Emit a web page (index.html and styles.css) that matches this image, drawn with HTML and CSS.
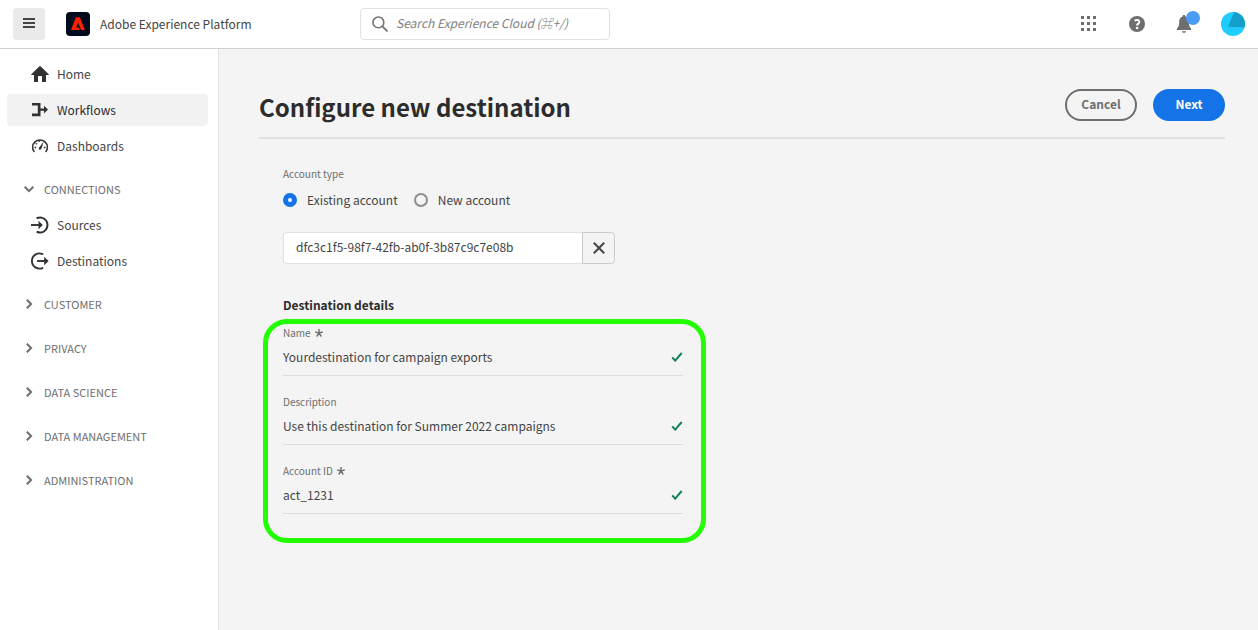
FILE: index.html
```html
<!DOCTYPE html>
<html lang="en">
<head>
<meta charset="utf-8">
<meta name="viewport" content="width=device-width, initial-scale=1">
<title>Adobe Experience Platform</title>
<link rel="stylesheet" href="styles.css">
</head>
<body>
<header class="topbar">
  <button class="menu-button" type="button" aria-label="Menu">
    <svg width="12" height="10" viewBox="0 0 12 10" fill="currentColor" aria-hidden="true"><path d="M0 0h12v2H0zM0 4h12v2H0zM0 8h12v2H0z"/></svg>
  </button>
  <a class="brand" href="#">
    <svg width="24" height="24" viewBox="0 0 24 24" aria-hidden="true"><rect width="24" height="24" rx="4" fill="#000b1d"/><path fill="#fa2000" d="M9.900 5.200h4L19 18h-3.900l-3-7.300-2 4.800h2.700l.9 2.500H5z"/></svg>
    <span>Adobe Experience Platform</span>
  </a>
  <div class="search">
    <svg width="16" height="16" viewBox="0 0 16 16" fill="none" stroke="currentColor" aria-hidden="true"><circle cx="6.400" cy="6.400" r="5.400" stroke-width="1.600"/><path d="M10.400 10.400l4.500 4.500" stroke-width="1.900" stroke-linecap="round"/></svg>
    <input class="search-input" type="search" aria-label="Search" placeholder="Search Experience Cloud (⌘+/)">
  </div>
  <div class="tools">
    <button class="tool" type="button" aria-label="Apps">
      <svg width="16" height="16" viewBox="0 0 16 16" fill="currentColor" aria-hidden="true"><path d="M0 0h3v3H0zM6 0h3v3H6zM12 0h3v3h-3zM0 6h3v3H0zM6 6h3v3H6zM12 6h3v3h-3zM0 12h3v3H0zM6 12h3v3H6zM12 12h3v3h-3z"/></svg>
    </button>
    <button class="tool" type="button" aria-label="Help">
      <svg width="16" height="16" viewBox="0 0 16 16" aria-hidden="true"><circle cx="8" cy="8" r="8" fill="currentColor"/><path d="M5.600 4.700C7.700 3.400 10.300 4 10.300 5.900c0 1.700-2.200 1.800-2.200 3.700" fill="none" stroke="#fff" stroke-width="2.100"/><circle cx="8.100" cy="12" r="1.300" fill="#fff"/></svg>
    </button>
    <button class="tool" type="button" aria-label="Notifications">
      <svg width="18" height="18" viewBox="0 0 18 18" fill="currentColor" aria-hidden="true"><path d="M8 0C7.100 0 6.600.6 6.600 1.500 4.200 2.300 3.200 4.300 3.200 6.800c0 3.500-.5 4.700-1.700 6-.4.400-.7.800-.7 1.400v.8h14.400v-.8c0-.6-.3-1-.7-1.400-1.200-1.300-1.700-2.500-1.700-6 0-2.500-1-4.500-3.400-5.300C9.400.6 8.900 0 8 0zM5.900 16.200h4.200c-.2 1-1.100 1.600-2.100 1.600s-1.900-.6-2.100-1.600z"/></svg>
      <span class="badge"></span>
    </button>
    <button class="tool" type="button" aria-label="Account">
      <svg width="24" height="24" viewBox="0 0 24 24" aria-hidden="true"><circle cx="12" cy="12" r="12" fill="#1fceff"/><path d="M13.200.1A12 12 0 0 1 23.500 15.300L7 14.800z" fill="#139fc9"/></svg>
    </button>
  </div>
</header>
<div class="shell">
  <nav class="sidebar" aria-label="Main">
    <div class="nav-list">
      <a class="nav-item" href="#"><svg width="18" height="18" viewBox="0 0 18 18" fill="currentColor" aria-hidden="true"><path d="M17.700 9.200L9.500 1.300a.7.700 0 0 0-1 0L.3 9.200c-.4.400-.1.800.3.800H3v6.300c0 .4.300.7.700.7H7v-6h4v6h3.300c.4 0 .7-.3.700-.7V10h2.400c.4 0 .7-.4.300-.8z"/></svg>Home</a>
      <a class="nav-item nav-item--active" href="#"><svg width="18" height="18" viewBox="0 0 18 18" fill="currentColor" aria-hidden="true"><path d="M1 2h8.500v5.500H13V4.800L17 8.600l-4 3.800V9.700H9.500v5.500H1v-2.600h5.800v-8H1z"/></svg>Workflows</a>
      <a class="nav-item" href="#"><svg width="18" height="18" viewBox="0 0 18 18" fill="none" stroke="currentColor" aria-hidden="true"><path d="M3.300 15A7.400 7.400 0 1 1 14.700 15" stroke-width="1.500"/><path d="M3.500 10.500h1.700M4.700 6.200l1.300 1M8 3.400l.3 1.600M14.500 10.500h-1.700" stroke-width="1.300"/><path d="M12.800 4.400L10.300 12c-.8 1.400-3 .6-2.500-1.100z" fill="currentColor" stroke="none"/></svg>Dashboards</a>
    </div>
    <button class="nav-heading" type="button" aria-expanded="true"><svg class="chevron chevron--open" width="10" height="10" viewBox="0 0 10 10" aria-hidden="true"><path d="M2.800.7L7.100 5 2.800 9.300"/></svg>CONNECTIONS</button>
    <div class="nav-list nav-list--nested">
      <a class="nav-item" href="#"><svg width="18" height="18" viewBox="0 0 18 18" fill="none" stroke="currentColor" stroke-width="1.900" aria-hidden="true"><path d="M6.300 2A7.500 7.500 0 1 1 6.300 16" stroke-linecap="round"/><path d="M0 9h9"/><path d="M7.500 4.800l4.300 4.200-4.300 4.200z" fill="currentColor" stroke="none"/></svg>Sources</a>
      <a class="nav-item" href="#"><svg width="18" height="18" viewBox="0 0 18 18" fill="none" stroke="currentColor" stroke-width="1.900" aria-hidden="true"><path d="M11.500 2A7.600 7.600 0 1 0 11.500 16" stroke-linecap="round"/><path d="M6 9h8"/><path d="M13.200 4.800L17.600 9l-4.400 4.200z" fill="currentColor" stroke="none"/></svg>Destinations</a>
    </div>
    <div class="nav-groups">
      <button class="nav-heading" type="button" aria-expanded="false"><svg class="chevron" width="10" height="10" viewBox="0 0 10 10" aria-hidden="true"><path d="M2.800.7L7.100 5 2.800 9.300"/></svg>CUSTOMER</button>
      <button class="nav-heading" type="button" aria-expanded="false"><svg class="chevron" width="10" height="10" viewBox="0 0 10 10" aria-hidden="true"><path d="M2.800.7L7.100 5 2.800 9.300"/></svg>PRIVACY</button>
      <button class="nav-heading" type="button" aria-expanded="false"><svg class="chevron" width="10" height="10" viewBox="0 0 10 10" aria-hidden="true"><path d="M2.800.7L7.100 5 2.800 9.300"/></svg>DATA SCIENCE</button>
      <button class="nav-heading" type="button" aria-expanded="false"><svg class="chevron" width="10" height="10" viewBox="0 0 10 10" aria-hidden="true"><path d="M2.800.7L7.100 5 2.800 9.300"/></svg>DATA MANAGEMENT</button>
      <button class="nav-heading" type="button" aria-expanded="false"><svg class="chevron" width="10" height="10" viewBox="0 0 10 10" aria-hidden="true"><path d="M2.800.7L7.100 5 2.800 9.300"/></svg>ADMINISTRATION</button>
    </div>
  </nav>
  <main class="content">
    <div class="page-header">
      <h1 class="page-title">Configure new destination</h1>
      <div class="actions">
        <button class="button" type="button">Cancel</button>
        <button class="button button--primary" type="submit" form="destination-form">Next</button>
      </div>
    </div>
    <form class="form" id="destination-form">
      <div class="label" id="account-type">Account type</div>
      <div class="radio-group" role="radiogroup" aria-labelledby="account-type">
        <label class="radio"><input type="radio" name="account" checked>Existing account</label>
        <label class="radio"><input type="radio" name="account">New account</label>
      </div>
      <div class="picker">
        <input class="picker-input" type="text" aria-label="Account" value="dfc3c1f5-98f7-42fb-ab0f-3b87c9c7e08b">
        <button class="picker-clear" type="button" aria-label="Clear account"><svg width="12" height="12" viewBox="0 0 12 12" fill="none" stroke="currentColor" stroke-width="2" aria-hidden="true"><path d="M.8.8l10.400 10.400M11.200.8L.8 11.200"/></svg></button>
      </div>
      <h2 class="section-title">Destination details</h2>
      <div class="highlight">
        <div class="field">
          <label class="label" for="name">Name <svg class="required" width="8" height="8" viewBox="0 0 8 8" aria-hidden="true"><path d="M4 4V0M4 4L.2 2.800M4 4l3.800-1.200M4 4L1.700 7.500M4 4l2.300 3.500"/></svg></label>
          <div class="control">
            <input class="field-input" id="name" type="text" value="Yourdestination for campaign exports" required>
            <svg class="check" width="12" height="10" viewBox="0 0 12 10" aria-hidden="true"><path d="M1.200 5.300l3 3.300L10.700 1"/></svg>
          </div>
        </div>
        <div class="field">
          <label class="label" for="description">Description</label>
          <div class="control">
            <input class="field-input" id="description" type="text" value="Use this destination for Summer 2022 campaigns">
            <svg class="check" width="12" height="10" viewBox="0 0 12 10" aria-hidden="true"><path d="M1.200 5.300l3 3.300L10.700 1"/></svg>
          </div>
        </div>
        <div class="field">
          <label class="label" for="account-id">Account ID <svg class="required" width="8" height="8" viewBox="0 0 8 8" aria-hidden="true"><path d="M4 4V0M4 4L.2 2.800M4 4l3.800-1.200M4 4L1.700 7.500M4 4l2.300 3.500"/></svg></label>
          <div class="control">
            <input class="field-input" id="account-id" type="text" value="act_1231" required>
            <svg class="check" width="12" height="10" viewBox="0 0 12 10" aria-hidden="true"><path d="M1.200 5.300l3 3.300L10.700 1"/></svg>
          </div>
        </div>
      </div>
    </form>
  </main>
</div>
</body>
</html>
```
FILE: styles.css
```css
* {
  box-sizing: border-box;
}

body {
  margin: 0;
  min-height: 100vh;
  display: flex;
  flex-direction: column;
  background: #fff;
  color: #444;
  font-family: "Noto Sans CJK SC", "Open Sans", sans-serif;
  font-size: 12px;
  line-height: 20px;
}

button,
input {
  font: inherit;
  color: inherit;
}

button {
  padding: 0;
  border: 0;
  background: none;
  cursor: pointer;
}

a {
  color: inherit;
  text-decoration: none;
}

svg {
  display: block;
  flex: none;
}

/* Top bar */
.topbar {
  display: flex;
  align-items: center;
  height: 49px;
  padding: 0 13px;
  border-bottom: 1px solid #d0d0d0;
}

.menu-button {
  display: grid;
  place-items: center;
  width: 32px;
  height: 32px;
  padding-bottom: 2px;
  border-radius: 4px;
  background: #eaeaea;
}

.brand {
  display: flex;
  align-items: center;
  gap: 10px;
  width: 294px;
  margin-left: 21px;
}

.search {
  display: flex;
  align-items: center;
  gap: 8px;
  width: 250px;
  height: 32px;
  padding: 0 11px;
  border: 1px solid #e1e1e1;
  border-radius: 4px;
  color: #747474;
}

.search-input {
  flex: 1;
  min-width: 0;
  padding: 0 0 2px;
  border: 0;
  outline: 0;
  background: none;
  font-style: italic;
}

.search-input::placeholder {
  color: #808080;
  opacity: 1;
}

.tools {
  display: flex;
  gap: 24px;
  margin-left: auto;
  color: #6e6e6e;
}

.tool {
  position: relative;
  display: grid;
  place-items: center;
  width: 24px;
  height: 24px;
}

.badge {
  position: absolute;
  top: -1px;
  right: -3px;
  width: 14px;
  height: 14px;
  border-radius: 50%;
  background: #4b9cf5;
}

/* Sidebar */
.shell {
  display: flex;
  flex: 1;
}

.sidebar {
  flex: none;
  width: 219px;
  padding: 9px 10px 9px 7px;
  border-right: 1px solid #e4e4e4;
}

.nav-list {
  display: flex;
  flex-direction: column;
  gap: 4px;
  margin-bottom: 11px;
}

.nav-list--nested {
  margin-top: 4px;
}

.nav-item {
  display: flex;
  align-items: center;
  gap: 8px;
  height: 32px;
  padding-left: 24px;
  border-radius: 4px;
}

.nav-item svg {
  color: #323232;
}

.nav-item--active {
  background: #f2f2f2;
  color: #2c2c2c;
}

.nav-groups {
  display: flex;
  flex-direction: column;
  gap: 12px;
}

.nav-heading {
  display: flex;
  align-items: center;
  gap: 10px;
  width: 100%;
  height: 32px;
  padding: 0 0 1px 17px;
  color: #6e6e6e;
  font-size: 11px;
}

.chevron {
  fill: none;
  stroke: currentColor;
  stroke-width: 2;
}

.chevron--open {
  transform: rotate(90deg);
}

/* Page */
.content {
  flex: 1;
  min-width: 0;
  padding: 40px 33px 40px 40px;
  background: #f4f4f4;
}

.page-header {
  display: flex;
  align-items: flex-start;
  justify-content: space-between;
  padding-bottom: 12px;
  border-bottom: 2px solid #e1e1e1;
}

.page-title {
  margin: 0;
  color: #2c2c2c;
  font-size: 24px;
  font-weight: 700;
  line-height: 36px;
}

.actions {
  display: flex;
  gap: 16px;
}

.button {
  min-width: 72px;
  height: 32px;
  padding: 0 12px 2px;
  border: 2px solid #6e6e6e;
  border-radius: 16px;
  color: #6e6e6e;
  font-weight: 700;
}

.button--primary {
  border-color: #1473e6;
  background: #1473e6;
  color: #fff;
}

.form {
  padding: 27px 24px 0;
}

.label {
  display: flex;
  align-items: center;
  gap: 4px;
  color: #6e6e6e;
  font-size: 10px;
  line-height: 16px;
}

.radio-group {
  display: flex;
  gap: 16px;
  margin-top: 8px;
}

.radio {
  display: flex;
  align-items: center;
  gap: 10px;
}

.radio input {
  appearance: none;
  width: 14px;
  height: 14px;
  margin: 0;
  border: 2px solid #8e8e8e;
  border-radius: 50%;
}

.radio input:checked {
  border: 5px solid #1473e6;
  background: #fff;
}

.picker {
  display: flex;
  width: 332px;
  height: 32px;
  margin-top: 22px;
}

.picker-input {
  flex: 1;
  min-width: 0;
  padding: 0 12px 2px;
  border: 1px solid #e1e1e1;
  border-right: 0;
  border-radius: 4px 0 0 4px;
  background: #fff;
}

.picker-clear {
  display: grid;
  place-items: center;
  width: 33px;
  border: 1px solid #cacaca;
  border-radius: 0 4px 4px 0;
}

.section-title {
  margin: 31px 0 4px;
  color: #2c2c2c;
  font-size: 12px;
  font-weight: 700;
  line-height: 20px;
}

.highlight {
  display: flex;
  flex-direction: column;
  gap: 18px;
  width: 443px;
  max-width: 100%;
  margin-left: -20px;
  padding: 1px 18px 24px 15px;
  border: 5px solid #22ff00;
  border-radius: 24px;
}

.control {
  display: flex;
  align-items: center;
  height: 35px;
  padding-bottom: 2px;
  border-bottom: 1px solid #dcdcdc;
}

.field-input {
  flex: 1;
  min-width: 0;
  padding: 0;
  border: 0;
  outline: 0;
  background: none;
}

.required {
  fill: none;
  stroke: currentColor;
  stroke-width: 1.4;
}

.check {
  fill: none;
  stroke: #12805c;
  stroke-width: 2;
}
```
